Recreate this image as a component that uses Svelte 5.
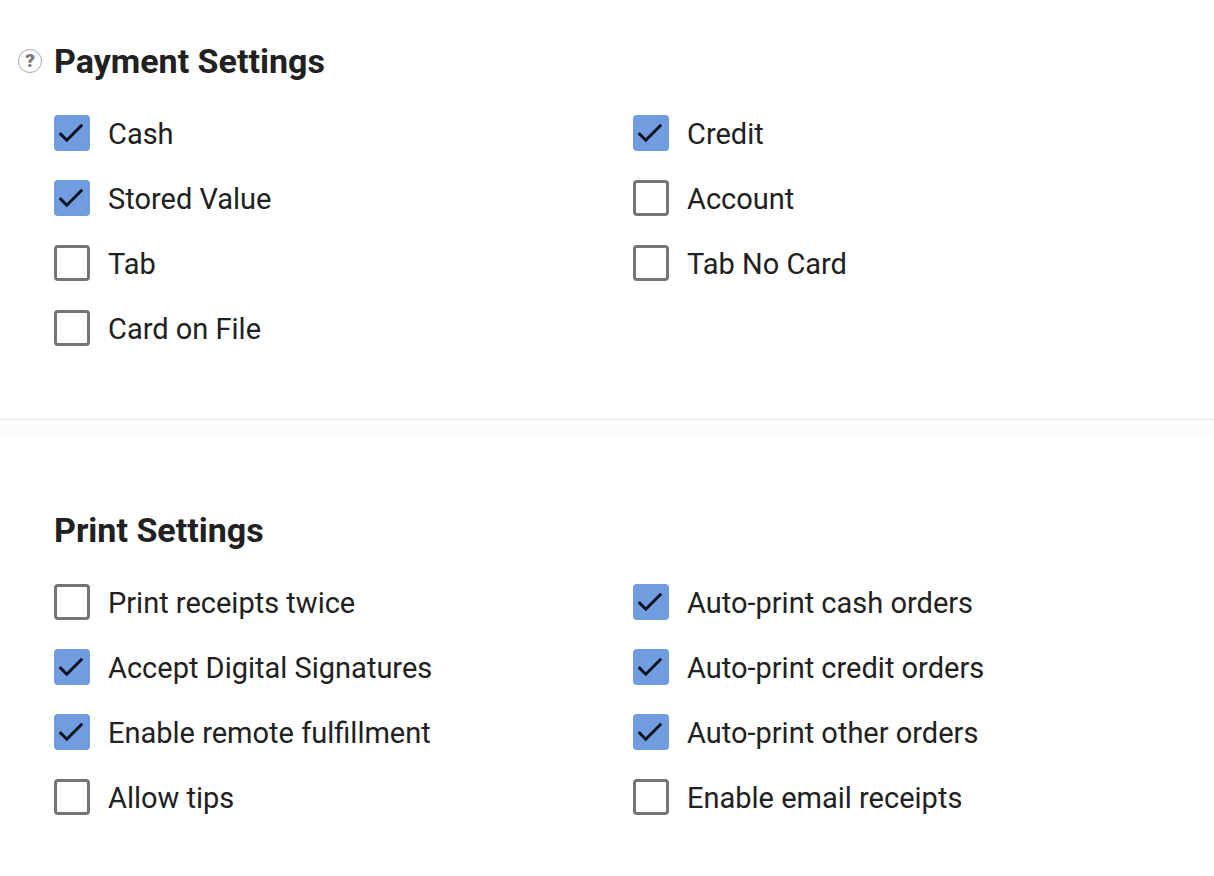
<script>
  let sections = $state([
    {
      id: 'payment',
      title: 'Payment Settings',
      help: true,
      options: [
        { label: 'Cash', checked: true },
        { label: 'Credit', checked: true },
        { label: 'Stored Value', checked: true },
        { label: 'Account', checked: false },
        { label: 'Tab', checked: false },
        { label: 'Tab No Card', checked: false },
        { label: 'Card on File', checked: false }
      ]
    },
    {
      id: 'print',
      title: 'Print Settings',
      help: false,
      options: [
        { label: 'Print receipts twice', checked: false },
        { label: 'Auto-print cash orders', checked: true },
        { label: 'Accept Digital Signatures', checked: true },
        { label: 'Auto-print credit orders', checked: true },
        { label: 'Enable remote fulfillment', checked: true },
        { label: 'Auto-print other orders', checked: true },
        { label: 'Allow tips', checked: false },
        { label: 'Enable email receipts', checked: false }
      ]
    }
  ]);
</script>

<main>
  {#each sections as section (section.id)}
    <section class="panel">
      <header>
        <span class="gutter">
          {#if section.help}
            <button type="button" class="help" aria-label="Help">?</button>
          {/if}
        </span>
        <h2>{section.title}</h2>
      </header>
      <div class="options">
        {#each section.options as option (option.label)}
          <label class="option">
            <span class="box">
              <input type="checkbox" bind:checked={option.checked} />
              <svg viewBox="0 0 36 36" aria-hidden="true"><path d="M5.7 18.1 12.8 25.2 28.2 9.8" /></svg>
            </span>
            <span class="text">{option.label}</span>
          </label>
        {/each}
      </div>
    </section>
  {/each}
</main>

<style>
  :global(body) {
    background: #fff;
  }
  main {
    font-family: Roboto, sans-serif;
    color: #212121;
  }
  .panel {
    padding: 40px 0 73px 18px;
  }
  .panel + .panel {
    padding-top: 89px;
    padding-bottom: 56px;
    border-top: 1px solid #e8e8e8;
    background: linear-gradient(#fcfcfc, #fcfcfc) top / 100% 14px no-repeat;
  }
  header {
    display: flex;
    align-items: center;
    gap: 12px;
  }
  .gutter {
    display: flex;
    width: 24px;
  }
  .help {
    box-sizing: border-box;
    width: 24px;
    height: 24px;
    padding: 0;
    border: 1px solid #a8a8ac;
    border-radius: 50%;
    background: #fff;
    color: #76767c;
    font: 900 19px/22px Roboto, sans-serif;
  }
  h2 {
    margin: 0;
    font-size: 34px;
    font-weight: 700;
    line-height: 42px;
  }
  .options {
    display: grid;
    grid-template-columns: 1fr 1fr;
    row-gap: 29px;
    padding: 33px 2px 0 36px;
  }
  .option {
    display: flex;
    gap: 18px;
  }
  .box {
    display: grid;
    flex: none;
    width: 36px;
    height: 36px;
  }
  input,
  svg {
    grid-area: 1 / 1;
    box-sizing: border-box;
    width: 36px;
    height: 36px;
    margin: 0;
  }
  input {
    appearance: none;
    border: 3px solid #757575;
    border-radius: 4px;
  }
  input:checked {
    border: 0;
    background: #709ce0;
  }
  svg {
    visibility: hidden;
    pointer-events: none;
    fill: none;
    stroke: #0b1322;
    stroke-width: 3;
  }
  input:checked + svg {
    visibility: visible;
  }
  .text {
    font-size: 29px;
    line-height: 38px;
    height: 36px;
  }
</style>
